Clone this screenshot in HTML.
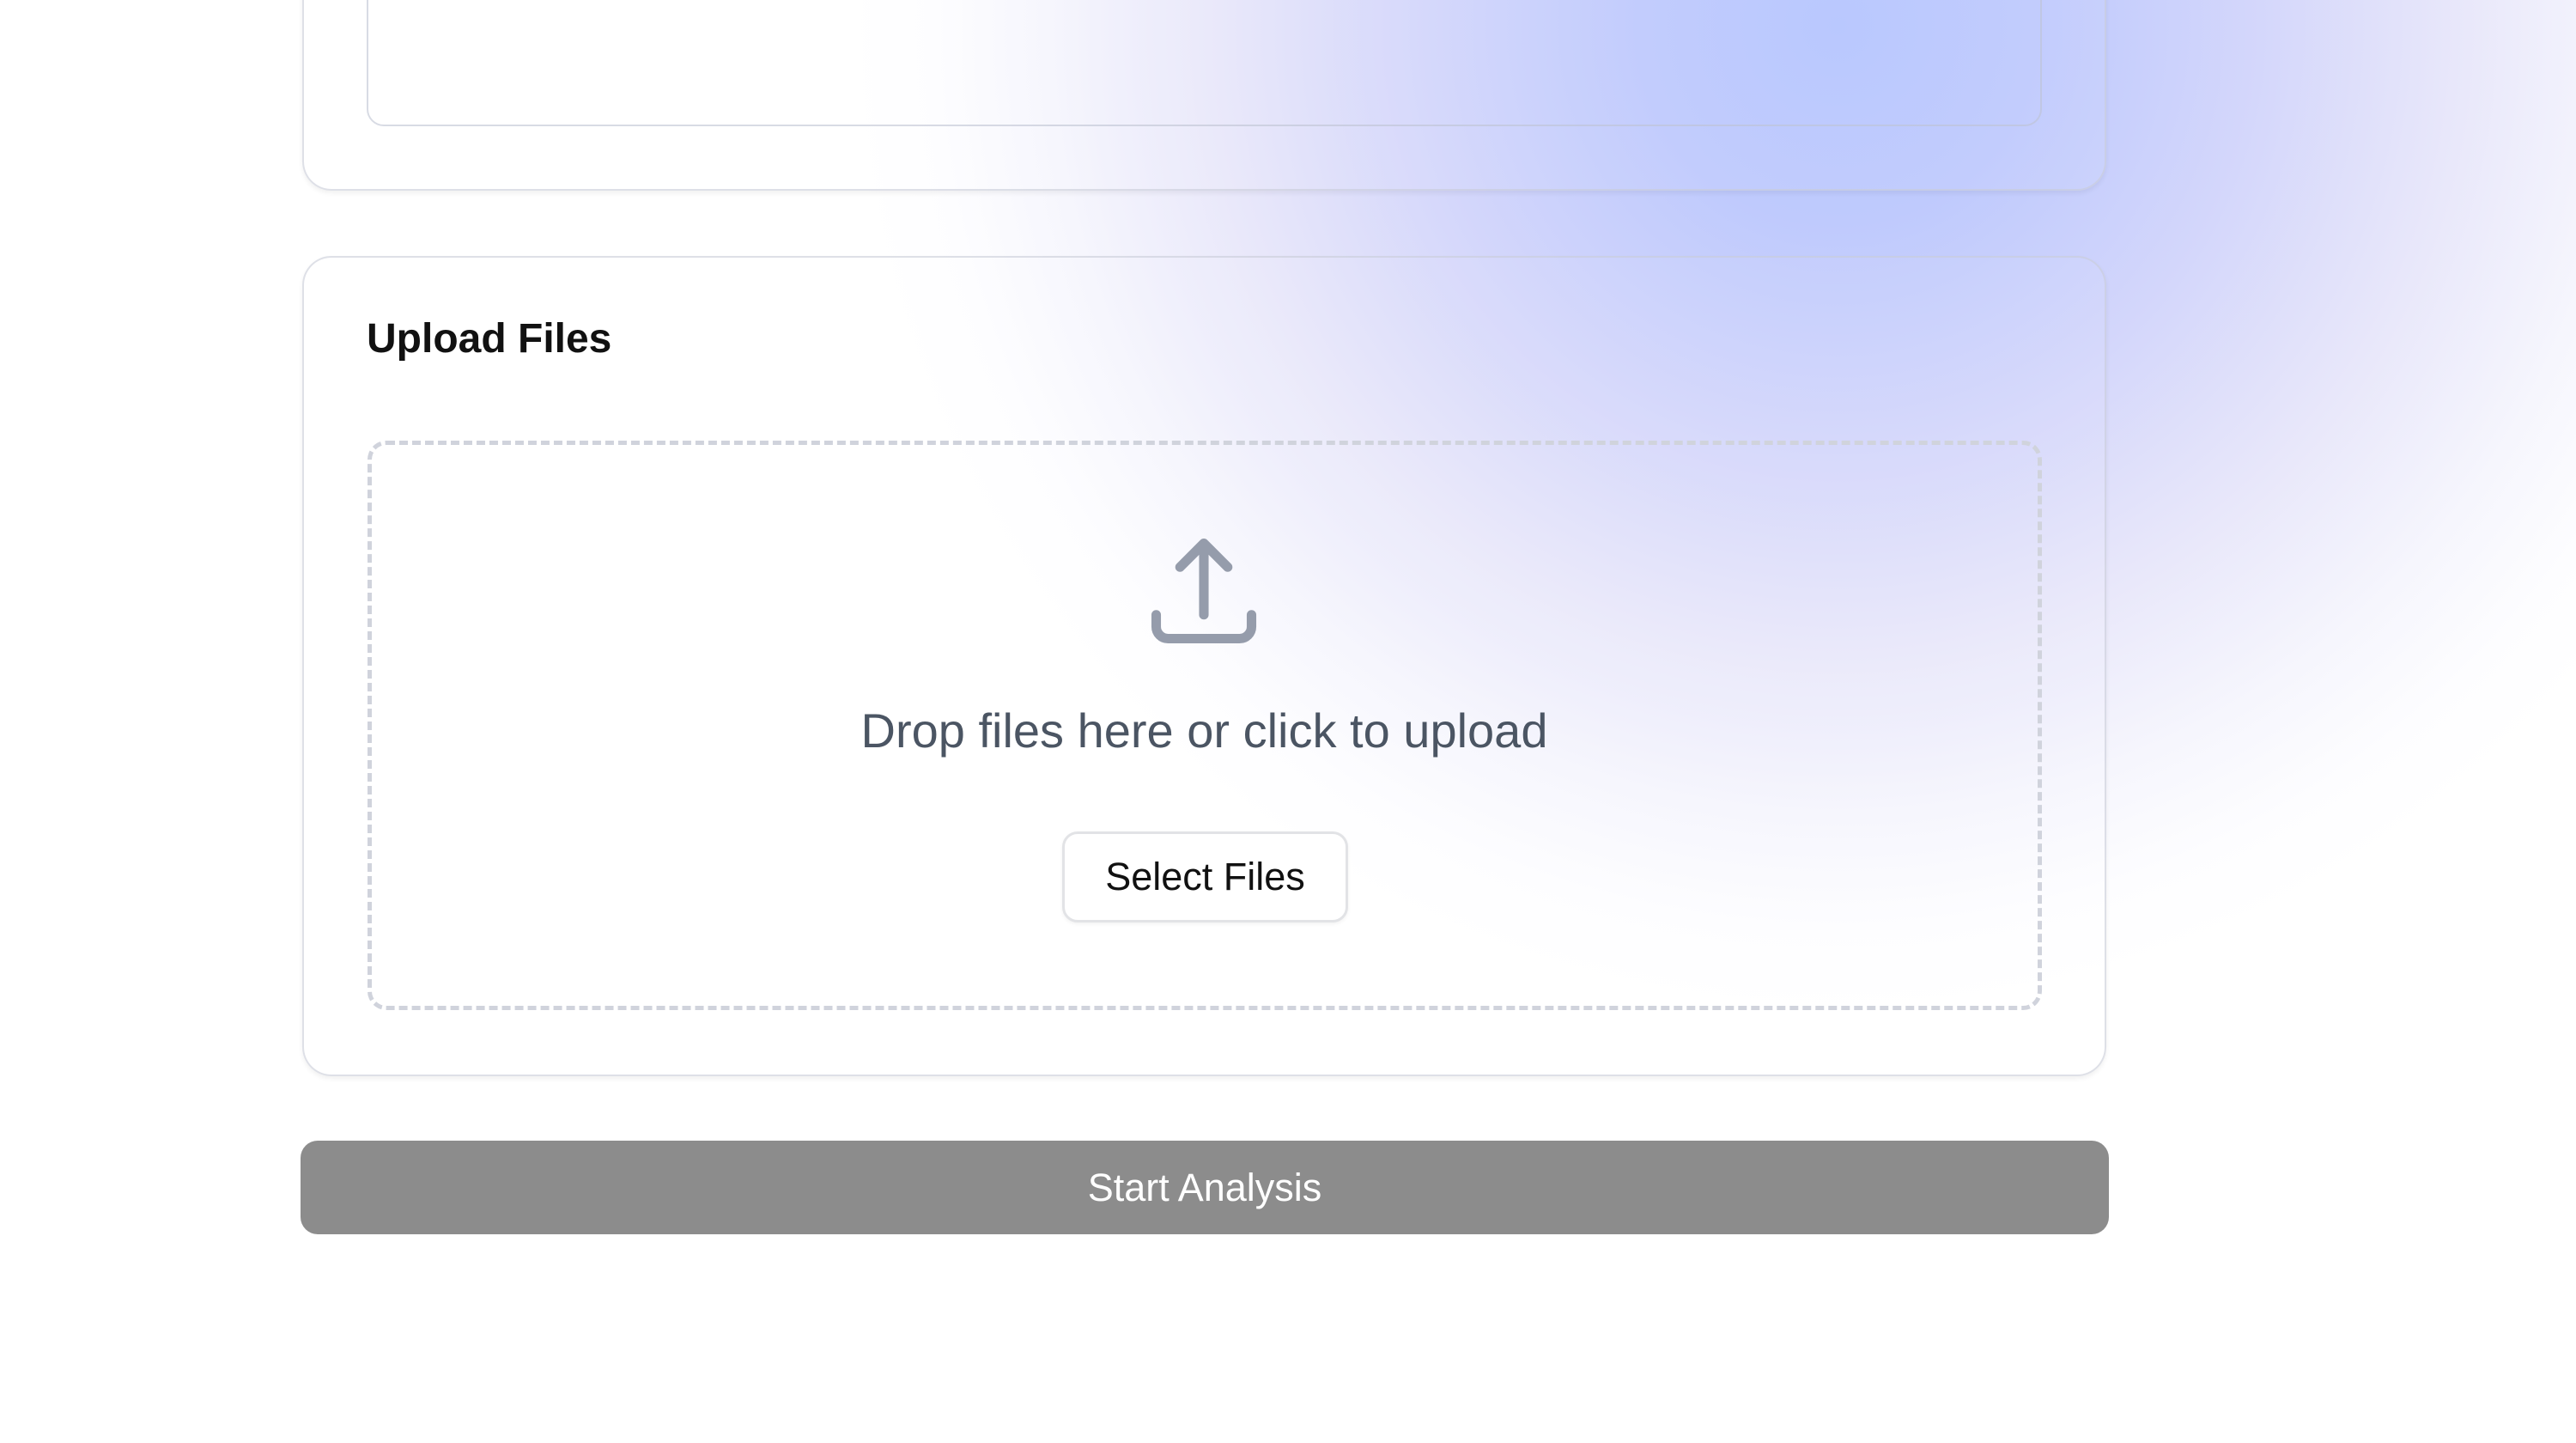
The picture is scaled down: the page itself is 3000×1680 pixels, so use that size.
<!DOCTYPE html>
<html><head><meta charset="utf-8"><style>
html,body{margin:0;padding:0;}
body{width:3000px;height:1680px;overflow:hidden;position:relative;font-family:"Liberation Sans",sans-serif;
background:radial-gradient(circle at 2140px 30px,#b6c6fe 0,#bfcafd 230px,#d3d6fb 480px,#e8e7fa 720px,#f6f6fd 920px,#fdfdff 1050px,#ffffff 1150px);}
.card{position:absolute;left:352px;width:2101px;border:2px solid rgba(200,204,215,0.6);border-radius:34px;background:rgba(255,255,255,0.05);box-shadow:0 3px 6px rgba(0,0,0,0.06);box-sizing:border-box;}
.ta{position:absolute;left:427px;width:1951px;top:-40px;height:187px;border:2px solid rgba(190,195,210,0.6);border-radius:20px;box-sizing:border-box;}
.title{position:absolute;left:427px;top:367px;font-size:48px;font-weight:bold;color:#111;}
.drop{position:absolute;left:428px;top:513px;width:1950px;height:663px;border:5px dashed #d0d3dc;border-radius:22px;box-sizing:border-box;}
.dtext{position:absolute;left:0;width:2805px;top:818px;text-align:center;font-size:56px;color:#4b5563;}
.sel{position:absolute;left:1237px;top:968px;width:333px;height:106px;border:3px solid #e2e3e6;border-radius:18px;background:#fff;box-sizing:border-box;text-align:center;line-height:100px;font-size:45px;color:#111;box-shadow:0 2px 4px rgba(0,0,0,0.05);}
.start{position:absolute;left:350px;top:1328px;width:2106px;height:109px;background:#8c8c8c;border-radius:20px;color:#fff;font-size:45px;text-align:center;line-height:109px;}
</style></head><body>
<div class="card" style="top:-60px;height:282px;"></div>
<div class="ta"></div>
<div class="card" style="top:298px;height:955px;"></div>
<div class="title">Upload Files</div>
<div class="drop"></div>
<svg style="position:absolute;left:1328px;top:614px" width="148" height="148" viewBox="0 0 24 24" fill="none" stroke="#959cab" stroke-width="1.8" stroke-linecap="round" stroke-linejoin="round"><path d="M3 16.5v2.25A2.25 2.25 0 005.25 21h13.5A2.25 2.25 0 0021 18.75V16.5M7.5 7.5L12 3m0 0l4.5 4.5M12 3v13.5"/></svg>
<div class="dtext">Drop files here or click to upload</div>
<div class="sel">Select Files</div>
<div class="start">Start Analysis</div>
</body></html>
